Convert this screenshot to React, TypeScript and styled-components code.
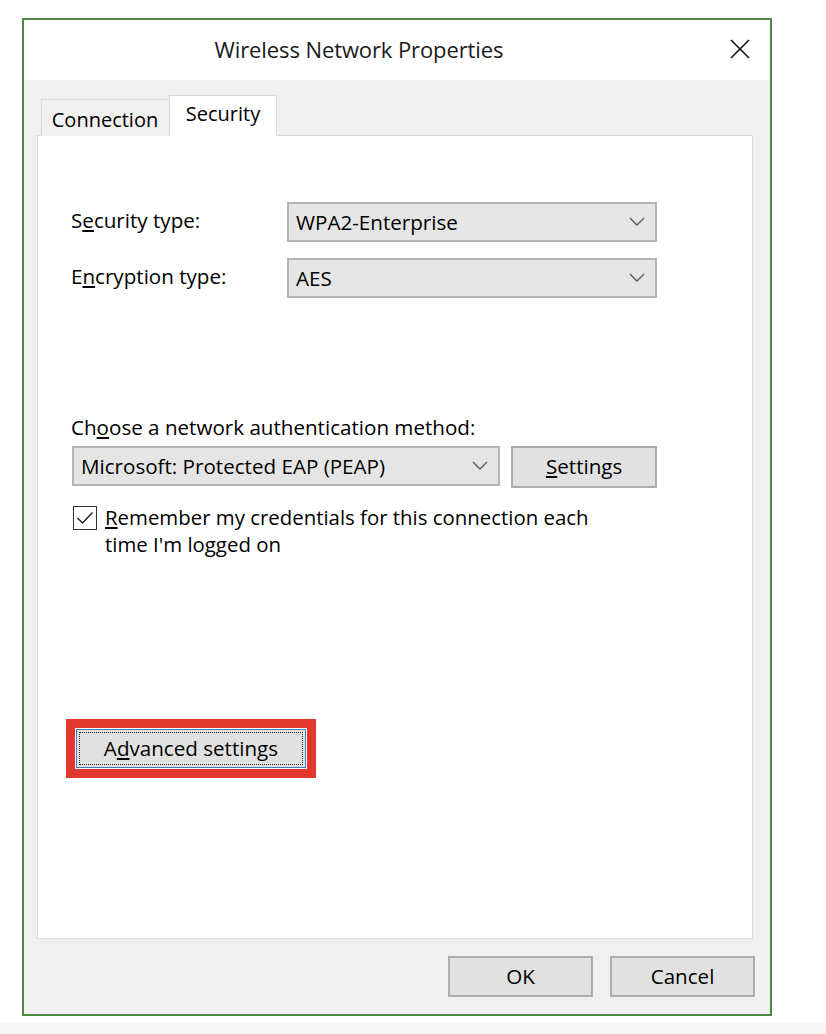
import styled, { createGlobalStyle } from "styled-components";

const GlobalStyle = createGlobalStyle`
    html, body {
        margin: 0;
        padding: 0;
        background: #ffffff;
    }
    * {
        box-sizing: border-box;
    }
`;

const Page = styled.div`
    width: 826px;
    height: 1034px;
    padding: 18px 0 0 22px;
    background: linear-gradient(to bottom, #ffffff 0, #ffffff 1023px, #f7f7f7 1023px);
    font-family: "Open Sans", "Noto Sans", sans-serif;
    color: #000;
`;

const Window = styled.div`
    width: 750px;
    height: 998px;
    border: 2px solid #4b8b3f;
    display: flex;
    flex-direction: column;
    background: #f0f0f0;
`;

const TitleBar = styled.div`
    height: 60px;
    background: #ffffff;
    display: flex;
    align-items: center;
`;

const Title = styled.div`
    flex: 1;
    text-align: center;
    font-size: 22px;
    letter-spacing: -0.1px;
    color: #1a1a1a;
    padding-bottom: 2px;
`;

const CloseButton = styled.div`
    width: 76px;
    height: 100%;
    display: flex;
    align-items: center;
    justify-content: flex-end;
    padding-right: 20px;
    padding-bottom: 2px;
`;

const Body = styled.div`
    flex: 1;
    display: flex;
    flex-direction: column;
    padding: 15px 17px 0 13px;
`;

const TabStrip = styled.div`
    display: flex;
    align-items: flex-end;
    height: 41px;
    padding-left: 4px;
    margin-bottom: -1px;
    position: relative;
    z-index: 1;
`;

const Tab = styled.div<{ $active?: boolean }>`
    display: flex;
    align-items: center;
    justify-content: center;
    font-size: 20px;
    border: 1px solid #d9d9d9;
    ${({ $active }) =>
        $active
            ? `
        width: 108px;
        height: 41px;
        background: #ffffff;
        border-bottom: 1px solid #ffffff;
        padding-bottom: 4px;
        margin-left: -1px;
    `
            : `
        width: 129px;
        height: 37px;
        background: #f0f0f0;
        border-right: none;
        border-bottom: none;
        padding-top: 2px;
        padding-right: 2px;
    `}
`;

const Panel = styled.div`
    height: 804px;
    background: #ffffff;
    border: 1px solid #d9d9d9;
    padding: 66px 95px 0 33px;
    display: flex;
    flex-direction: column;
    font-size: 20.6px;
`;

const FieldRow = styled.div<{ $gap?: number }>`
    display: grid;
    grid-template-columns: 216px 1fr;
    align-items: center;
    margin-top: ${({ $gap }) => $gap ?? 0}px;
`;

const Label = styled.div`
    line-height: 27px;
    padding-bottom: 3px;
`;

const Select = styled.div<{ $width?: number }>`
    height: 40px;
    ${({ $width }) => ($width ? `width: ${$width}px;` : "")}
    background: #e5e5e5;
    border: 2px solid #b4b4b4;
    display: flex;
    align-items: center;
    justify-content: space-between;
    padding: 0 10px 1px 7px;
`;

const Chevron = () => (
    <svg width="16" height="9" viewBox="0 0 16 9">
        <path d="M1 1 L8 8 L15 1" fill="none" stroke="#5a5a5a" strokeWidth="1.4" />
    </svg>
);

const SectionLabel = styled.div`
    margin-top: 116px;
    line-height: 27px;
`;

const AuthRow = styled.div`
    display: flex;
    align-items: flex-start;
    gap: 11px;
    margin-top: 5px;
    margin-left: 1px;
`;

const Button = styled.div<{ $width: number; $height?: number }>`
    width: ${({ $width }) => $width}px;
    height: ${({ $height }) => $height ?? 42}px;
    background: #e1e1e1;
    border: 2px solid #adadad;
    display: flex;
    align-items: center;
    justify-content: center;
    font-size: 20.6px;
    padding-bottom: 2px;
`;

const CheckRow = styled.div`
    display: flex;
    align-items: flex-start;
    margin-top: 16px;
    margin-left: 2px;
    gap: 8px;
`;

const CheckBox = styled.div`
    width: 24px;
    height: 24px;
    margin-top: 2px;
    border: 1.5px solid #333;
    background: #fff;
    display: flex;
    align-items: center;
    justify-content: center;
    flex-shrink: 0;
`;

const CheckText = styled.div`
    display: flex;
    flex-direction: column;
    font-size: 20.4px;
`;

const CheckLine = styled.div`
    line-height: 27px;
    white-space: nowrap;
`;

const Highlight = styled.div`
    align-self: flex-start;
    margin-top: 161px;
    margin-left: -5px;
    border: 9px solid #e0382f;
    padding: 1px;
    background: #fff;
`;

const FocusButton = styled.div`
    width: 230px;
    height: 39px;
    background: #e1e1e1;
    border: 1px solid #3b7bc0;
    padding: 2px;
    display: flex;
`;

const FocusInner = styled.div`
    flex: 1;
    border: 1px dotted #222;
    display: flex;
    align-items: center;
    justify-content: center;
    font-size: 20.6px;
    padding-bottom: 2px;
`;

const Footer = styled.div`
    display: flex;
    justify-content: flex-end;
    gap: 17px;
    margin-top: 17px;
    margin-right: -2px;
`;

function App() {
    return (
        <>
            <GlobalStyle />
            <Page>
                <Window>
                    <TitleBar>
                        <Title>Wireless Network Properties</Title>
                        <CloseButton>
                            <svg width="20" height="20" viewBox="0 0 20 20">
                                <path d="M1 1 L19 19 M19 1 L1 19" stroke="#111" strokeWidth="1.6" />
                            </svg>
                        </CloseButton>
                    </TitleBar>
                    <Body>
                        <TabStrip>
                            <Tab>Connection</Tab>
                            <Tab $active>Security</Tab>
                        </TabStrip>
                        <Panel>
                            <FieldRow>
                                <Label>
                                    S<u>e</u>curity type:
                                </Label>
                                <Select>
                                    WPA2-Enterprise
                                    <Chevron />
                                </Select>
                            </FieldRow>
                            <FieldRow $gap={16}>
                                <Label>
                                    E<u>n</u>cryption type:
                                </Label>
                                <Select>
                                    AES
                                    <Chevron />
                                </Select>
                            </FieldRow>
                            <SectionLabel>
                                Ch<u>o</u>ose a network authentication method:
                            </SectionLabel>
                            <AuthRow>
                                <Select $width={429}>
                                    Microsoft: Protected EAP (PEAP)
                                    <Chevron />
                                </Select>
                                <Button $width={146}>
                                    <span>
                                        <u>S</u>ettings
                                    </span>
                                </Button>
                            </AuthRow>
                            <CheckRow>
                                <CheckBox>
                                    <svg width="18" height="14" viewBox="0 0 18 14">
                                        <path d="M1.5 7 L6.5 12 L16.5 1.5" fill="none" stroke="#222" strokeWidth="1.5" />
                                    </svg>
                                </CheckBox>
                                <CheckText>
                                    <CheckLine>
                                        <u>R</u>emember my credentials for this connection each
                                    </CheckLine>
                                    <CheckLine>time I'm logged on</CheckLine>
                                </CheckText>
                            </CheckRow>
                            <Highlight>
                                <FocusButton>
                                    <FocusInner>
                                        <span>
                                            A<u>d</u>vanced settings
                                        </span>
                                    </FocusInner>
                                </FocusButton>
                            </Highlight>
                        </Panel>
                        <Footer>
                            <Button $width={145} $height={41}>
                                OK
                            </Button>
                            <Button $width={145} $height={41}>
                                Cancel
                            </Button>
                        </Footer>
                    </Body>
                </Window>
            </Page>
        </>
    );
}

export default App;
